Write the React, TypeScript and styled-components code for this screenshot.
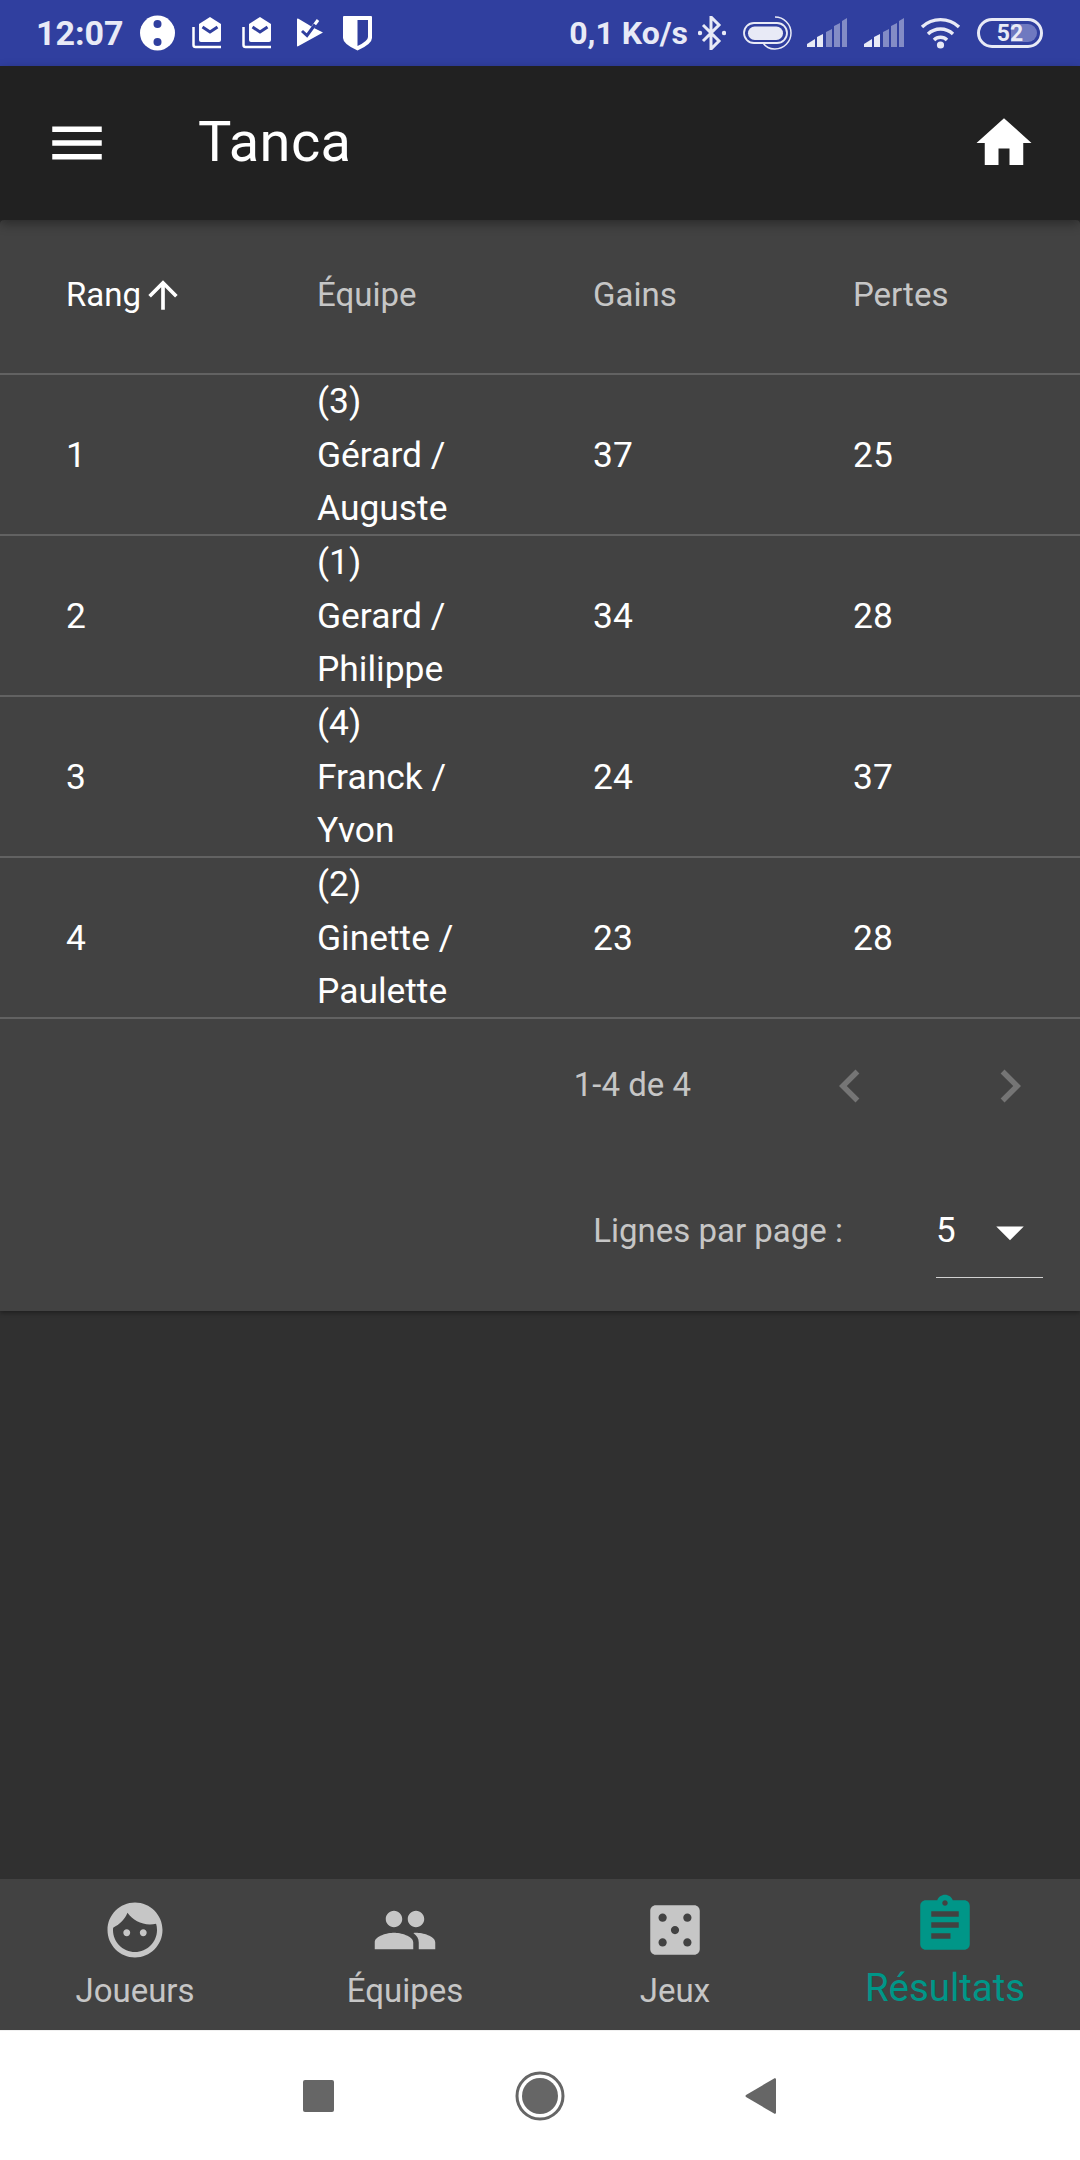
import React from 'react';
import styled, { createGlobalStyle } from 'styled-components';

const Global = createGlobalStyle`
  html, body { margin: 0; padding: 0; background: #303030; }
  * { box-sizing: border-box; }
`;

const Page = styled.div`
  width: 1080px;
  height: 2160px;
  display: flex;
  flex-direction: column;
  font-family: Roboto, sans-serif;
  background: #303030;
  overflow: hidden;
`;

const StatusBar = styled.div`
  height: 66px;
  flex: none;
  background: #303f9f;
  color: #e8eaf6;
  display: flex;
  justify-content: space-between;
  align-items: center;
  padding: 0 37px 0 36px;
`;
const StatusGroup = styled.div`
  display: flex;
  align-items: center;
`;
const StatusText = styled.span<{ $gap: number; $size: number }>`
  font-size: ${(p) => p.$size}px;
  font-weight: 700;
  line-height: 66px;
  margin-right: ${(p) => p.$gap}px;
`;
const StatusIcon = styled.svg<{ $gap: number }>`
  display: block;
  flex: none;
  margin-right: ${(p) => p.$gap}px;
`;
const Battery = styled.div`
  width: 66px;
  height: 30px;
  border: 3px solid #e8eaf6;
  border-radius: 15px;
  position: relative;
  overflow: hidden;
  display: flex;
  align-items: center;
  justify-content: center;
  font-size: 23px;
  font-weight: 700;
  color: #e8eaf6;
`;
const BatteryFill = styled.span`
  position: absolute;
  left: 3px;
  right: 3px;
  top: 3px;
  bottom: 3px;
  border-radius: 10px;
  background: linear-gradient(90deg, transparent 0 52%, #6f79c0 52%);
`;
const BatteryLabel = styled.span`
  position: relative;
`;

const AppBar = styled.header`
  height: 154px;
  flex: none;
  background: #212121;
  color: #fff;
  display: flex;
  align-items: center;
  padding: 0 43px 0 44px;
  position: relative;
  z-index: 2;
  box-shadow: 0 4px 10px rgba(0, 0, 0, 0.35);
`;
const Title = styled.h1`
  margin: 0 0 0 88px;
  flex: 1;
  font-size: 56px;
  font-weight: 400;
  letter-spacing: 0.4px;
  line-height: 1;
  padding-bottom: 2px;
`;

const Main = styled.main`
  flex: 1;
`;
const Card = styled.section`
  background: #424242;
  border-radius: 4px 4px 0 0;
  height: 1091px;
  display: flex;
  flex-direction: column;
  box-shadow: 0 2px 4px rgba(0, 0, 0, 0.35);
`;
const Row = styled.div<{ $head?: boolean }>`
  display: grid;
  grid-template-columns: 317px 276px 260px 227px;
  align-items: ${(p) => (p.$head ? 'start' : 'center')};
  height: ${(p) => (p.$head ? 155 : 161)}px;
  padding: ${(p) => (p.$head ? '48px 0 0' : '0 0 3px')};
  border-bottom: 2px solid #626262;
  flex: none;
  font-size: ${(p) => (p.$head ? 33 : 35.4)}px;
  line-height: 53.67px;
  color: #fff;
`;
const Cell = styled.div<{ $muted?: boolean }>`
  color: ${(p) => (p.$muted ? '#c6c6c6' : '#fff')};
  &:first-child { padding-left: 66px; display: flex; align-items: center; }
`;
const TeamCell = styled(Cell)`
  width: 150px;
`;

const Pager = styled.div`
  height: 149px;
  flex: none;
  display: flex;
  justify-content: flex-end;
  align-items: center;
  padding: 0 37px 15px 0;
  font-size: 33px;
  color: #c6c6c6;
`;
const PagerText = styled.span`
  margin-right: 126px;
  padding-bottom: 4px;
`;
const PagerGap = styled.span`
  width: 94px;
`;
const PerPage = styled.div`
  display: flex;
  justify-content: flex-end;
  align-items: flex-start;
  padding: 36px 37px 0 0;
  font-size: 33px;
  line-height: 54px;
  color: #c6c6c6;
`;
const PerPageLabel = styled.span`
  margin-right: 93px;
`;
const SelectBox = styled.div`
  width: 107px;
  height: 74px;
  padding-left: 0;
  font-size: 35px;
  color: #fff;
  border-bottom: 1px solid #d0d0d0;
  display: flex;
  position: relative;
`;
const SelectArrow = styled.svg`
  position: absolute;
  right: 0;
  top: -5px;
`;

const BottomNav = styled.nav`
  height: 151px;
  flex: none;
  background: #424242;
  display: grid;
  grid-template-columns: repeat(4, 270px);
`;
const NavItem = styled.div<{ $active?: boolean }>`
  display: flex;
  flex-direction: column;
  align-items: center;
  color: ${(p) => (p.$active ? '#009688' : '#c6c6c6')};
  font-size: ${(p) => (p.$active ? 38.4 : 33)}px;
  line-height: 40px;
  padding-top: ${(p) => (p.$active ? 13 : 18)}px;
`;
const NavLabel = styled.span<{ $active?: boolean }>`
  margin-top: ${(p) => (p.$active ? 10 : 8)}px;
`;

const SystemNav = styled.div`
  height: 130px;
  flex: none;
  background: #fff;
  display: flex;
  align-items: center;
  justify-content: center;
  gap: 180px;
  border-top: 1px solid #f0f0f0;
`;

const Mi = ({ d, size = 66, color = 'currentColor' }: { d: string; size?: number; color?: string }) => (
  <svg width={size} height={size} viewBox="0 0 24 24" fill={color} style={{ display: 'block', flex: 'none' }}>
    <path d={d} />
  </svg>
);

const ICONS = {
  menu: 'M3 18h18v-2H3v2zm0-5h18v-2H3v2zm0-7v2h18V6H3z',
  home: 'M10 20v-6h4v6h5v-8h3L12 3 2 12h3v8z',
  up: 'M4 12l1.41 1.41L11 7.83V20h2V7.83l5.58 5.59L20 12l-8-8-8 8z',
  prev: 'M15.41 7.41L14 6l-6 6 6 6 1.41-1.41L10.83 12z',
  next: 'M10 6L8.59 7.41 13.17 12l-4.58 4.59L10 18l6-6z',
  face: 'M9 11.75c-.69 0-1.25.56-1.25 1.25s.56 1.25 1.25 1.25 1.25-.56 1.25-1.25-.56-1.25-1.25-1.25zm6 0c-.69 0-1.25.56-1.25 1.25s.56 1.25 1.25 1.25 1.25-.56 1.25-1.25-.56-1.25-1.25-1.25zM12 2C6.48 2 2 6.48 2 12s4.48 10 10 10 10-4.48 10-10S17.52 2 12 2zm0 18c-4.41 0-8-3.59-8-8 0-.29.02-.58.05-.86 2.36-1.05 4.23-2.98 5.21-5.37C11.07 8.33 14.05 10 17.42 10c.78 0 1.53-.09 2.25-.26.21.71.33 1.47.33 2.26 0 4.41-3.59 8-8 8z',
  people: 'M16 11c1.66 0 2.99-1.34 2.99-3S17.66 5 16 5c-1.66 0-3 1.34-3 3s1.34 3 3 3zm-8 0c1.66 0 2.99-1.34 2.99-3S9.66 5 8 5C6.34 5 5 6.34 5 8s1.34 3 3 3zm0 2c-2.33 0-7 1.17-7 3.5V19h14v-2.5c0-2.33-4.67-3.5-7-3.5zm8 0c-.29 0-.62.02-.97.05 1.16.84 1.97 1.97 1.97 3.45V19h6v-2.5c0-2.33-4.67-3.5-7-3.5z',
  casino: 'M19 3H5c-1.1 0-2 .9-2 2v14c0 1.1.9 2 2 2h14c1.1 0 2-.9 2-2V5c0-1.1-.9-2-2-2zM7.5 18c-.83 0-1.5-.67-1.5-1.5S6.67 15 7.5 15s1.5.67 1.5 1.5S8.33 18 7.5 18zm0-9C6.67 9 6 8.33 6 7.5S6.67 6 7.5 6 9 6.67 9 7.5 8.33 9 7.5 9zm4.5 4.5c-.83 0-1.5-.67-1.5-1.5s.67-1.5 1.5-1.5 1.5.67 1.5 1.5-.67 1.5-1.5 1.5zm4.5 4.5c-.83 0-1.5-.67-1.5-1.5s.67-1.5 1.5-1.5 1.5.67 1.5 1.5-.67 1.5-1.5 1.5zm0-9c-.83 0-1.5-.67-1.5-1.5S15.67 6 16.5 6s1.5.67 1.5 1.5S17.33 9 16.5 9z',
  assignment: 'M19 3h-4.18C14.4 1.84 13.3 1 12 1c-1.3 0-2.4.84-2.82 2H5c-1.1 0-2 .9-2 2v14c0 1.1.9 2 2 2h14c1.1 0 2-.9 2-2V5c0-1.1-.9-2-2-2zm-7 0c.55 0 1 .45 1 1s-.45 1-1 1-1-.45-1-1 .45-1 1-1zm2 14H7v-2h7v2zm3-4H7v-2h10v2zm0-4H7V7h10v2z',
};

const Mail = ({ gap }: { gap: number }) => (
  <StatusIcon $gap={gap} width={30} height={32} viewBox="0 0 30 32">
    <path d="M7 7L18 0l11 7v16q0 2-2 2H9q-2 0-2-2z" fill="#fff" />
    <path d="M10.5 10l7.5 5 7.5-5" fill="none" stroke="#303f9f" strokeWidth="3" />
    <path d="M1.5 10v18q0 2 2 2H29" fill="none" stroke="#fff" strokeWidth="2.5" />
  </StatusIcon>
);

const Signal = ({ gap }: { gap: number }) => (
  <StatusIcon $gap={gap} width={40} height={30} viewBox="0 0 40 30">
    <path d="M0 29v-3l8-5v8z" fill="#e8eaf6" />
    <path d="M10 29V19l6-3v13z" fill="#e8eaf6" />
    <path d="M19 29V14l6-3v18zM27 29V8l6-3v24zM35 29V3l5-3v29z" fill="#e8eaf6" opacity="0.45" />
  </StatusIcon>
);

const teams = [
  { rank: 1, team: '(3) Gérard / Auguste', won: 37, lost: 25 },
  { rank: 2, team: '(1) Gerard / Philippe', won: 34, lost: 28 },
  { rank: 3, team: '(4) Franck / Yvon', won: 24, lost: 37 },
  { rank: 4, team: '(2) Ginette / Paulette', won: 23, lost: 28 },
];

export default function App() {
  return (
    <Page>
      <Global />
      <StatusBar>
        <StatusGroup>
          <StatusText $gap={16} $size={34}>12:07</StatusText>
          <StatusIcon $gap={17} width={35} height={36} viewBox="0 0 35 36">
            <circle cx="17.5" cy="18" r="17.5" fill="#fff" />
            <circle cx="17.5" cy="9" r="4" fill="#303f9f" />
            <circle cx="17.5" cy="27" r="4" fill="#303f9f" />
          </StatusIcon>
          <Mail gap={20} />
          <Mail gap={25} />
          <StatusIcon $gap={19} width={27} height={30} viewBox="0 0 27 30">
            <path d="M0 1.5Q0 0 1.5.8L12 7 15 9 26 14.5 1.5 28Q0 29 0 27.5z" fill="#fff" />
            <path d="M15.5 9.5L21 2" fill="none" stroke="#fff" strokeWidth="3" />
            <path d="M5 13l5 4.5 8-11" fill="none" stroke="#303f9f" strokeWidth="3" />
          </StatusIcon>
          <StatusIcon $gap={0} width={29} height={36} viewBox="0 0 29 36">
            <path d="M1 1h27q1 0 1 1v21q0 6-14.5 12.5Q0 29 0 23V2q0-1 1-1z" fill="#fff" />
            <path d="M14.5 5H25v17q0 4-10.5 9z" fill="#303f9f" />
          </StatusIcon>
        </StatusGroup>
        <StatusGroup>
          <StatusText $gap={10} $size={32}>0,1 Ko/s</StatusText>
          <StatusIcon $gap={17} width={28} height={34} viewBox="0 0 28 34">
            <path d="M5 9l16 16-8 8V1l8 8L5 25" fill="none" stroke="#e8eaf6" strokeWidth="3" />
            <circle cx="2" cy="17" r="2.2" fill="#e8eaf6" />
            <circle cx="26" cy="17" r="2.2" fill="#e8eaf6" />
          </StatusIcon>
          <StatusIcon $gap={15} width={49} height={34} viewBox="0 0 49 34">
            <rect x="1" y="7" width="43" height="20" rx="10" fill="none" stroke="#e8eaf6" strokeWidth="1.8" />
            <rect x="5" y="10.5" width="35" height="13.5" rx="6.7" fill="#e8eaf6" />
            <path d="M32 1a16 16 0 0 1 0 32 14 14 0 0 1-12-6" fill="none" stroke="#e8eaf6" strokeWidth="1.5" />
          </StatusIcon>
          <Signal gap={17} />
          <Signal gap={16} />
          <StatusIcon $gap={16} width={41} height={32} viewBox="0 0 41 32">
            <path d="M2 10a27 27 0 0 1 37 0M8 17a18 18 0 0 1 25 0M14 23a9 9 0 0 1 13 0" fill="none" stroke="#e8eaf6" strokeWidth="3.4" />
            <circle cx="20.5" cy="28" r="3.6" fill="#e8eaf6" />
          </StatusIcon>
          <Battery>
            <BatteryFill />
            <BatteryLabel>52</BatteryLabel>
          </Battery>
        </StatusGroup>
      </StatusBar>

      <AppBar>
        <Mi d={ICONS.menu} />
        <Title>Tanca</Title>
        <Mi d={ICONS.home} />
      </AppBar>

      <Main>
        <Card>
          <Row $head>
            <Cell>
              Rang
              <Mi d={ICONS.up} size={44} />
            </Cell>
            <Cell $muted>Équipe</Cell>
            <Cell $muted>Gains</Cell>
            <Cell $muted>Pertes</Cell>
          </Row>
          {teams.map((t) => (
            <Row key={t.rank}>
              <Cell>{t.rank}</Cell>
              <TeamCell>{t.team}</TeamCell>
              <Cell>{t.won}</Cell>
              <Cell>{t.lost}</Cell>
            </Row>
          ))}
          <Pager>
            <PagerText>1-4 de 4</PagerText>
            <Mi d={ICONS.prev} color="#757575" />
            <PagerGap />
            <Mi d={ICONS.next} color="#757575" />
          </Pager>
          <PerPage>
            <PerPageLabel>Lignes par page :</PerPageLabel>
            <SelectBox>
              5
              <SelectArrow width={66} height={66} viewBox="0 0 24 24" fill="#fff">
                <path d="M7 10l5 5 5-5z" />
              </SelectArrow>
            </SelectBox>
          </PerPage>
        </Card>
      </Main>

      <BottomNav>
        <NavItem>
          <Mi d={ICONS.face} />
          <NavLabel>Joueurs</NavLabel>
        </NavItem>
        <NavItem>
          <Mi d={ICONS.people} />
          <NavLabel>Équipes</NavLabel>
        </NavItem>
        <NavItem>
          <Mi d={ICONS.casino} />
          <NavLabel>Jeux</NavLabel>
        </NavItem>
        <NavItem $active>
          <Mi d={ICONS.assignment} />
          <NavLabel $active>Résultats</NavLabel>
        </NavItem>
      </BottomNav>

      <SystemNav>
        <svg width={32} height={32} viewBox="0 0 32 32"><rect width="31" height="32" rx="2" fill="#666" /></svg>
        <svg width={50} height={50} viewBox="0 0 50 50">
          <circle cx="25" cy="25" r="23" fill="none" stroke="#666" strokeWidth="3" />
          <circle cx="25" cy="25" r="18" fill="#666" />
        </svg>
        <svg width={32} height={38} viewBox="0 0 32 38"><path d="M31 2v34l-1 1L1 20q-1-1 0-2L30 1z" fill="#666" /></svg>
      </SystemNav>
    </Page>
  );
}
